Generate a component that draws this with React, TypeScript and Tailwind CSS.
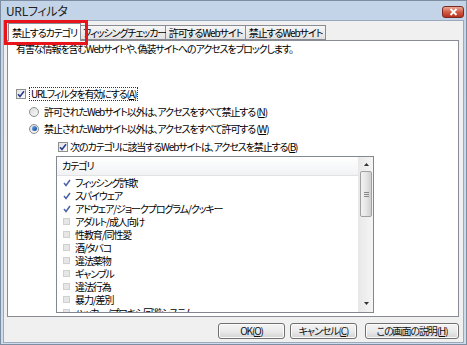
import type { ReactNode } from 'react';

const categories: { name: string; checked: boolean }[] = [
  { name: 'フィッシング詐欺', checked: true },
  { name: 'スパイウェア', checked: true },
  { name: 'アドウェア/ジョークプログラム/クッキー', checked: true },
  { name: 'アダルト/成人向け', checked: false },
  { name: '性教育/同性愛', checked: false },
  { name: '酒/タバコ', checked: false },
  { name: '違法薬物', checked: false },
  { name: 'ギャンブル', checked: false },
  { name: '違法行為', checked: false },
  { name: '暴力/差別', checked: false },
  { name: 'ハッカー/プロキシ回避システム', checked: false },
];

function Check({ checked = false }: { checked?: boolean }) {
  return (
    <span className="flex h-[10px] w-[10px] shrink-0 items-center justify-center border border-[#8e8f8f] bg-gradient-to-br from-[#e3e3e3] to-[#fbfbfb]">
      {checked && (
        <svg width="8" height="8" viewBox="0 0 8 8">
          <path d="M1 4.2 L3 6.4 L7 1.2" fill="none" stroke="#2a3f8f" strokeWidth="1.6" />
        </svg>
      )}
    </span>
  );
}

function Radio({ on = false }: { on?: boolean }) {
  return (
    <span className="flex h-[10px] w-[10px] shrink-0 items-center justify-center rounded-full border border-[#8e8f8f] bg-gradient-to-br from-[#dcdcdc] to-[#f8f8f8]">
      {on && <span className="h-[5px] w-[5px] rounded-full bg-gradient-to-br from-[#6fb0f0] to-[#0d3f92]" />}
    </span>
  );
}

function ListCheck({ checked }: { checked: boolean }) {
  return checked ? (
    <span className="flex h-[8px] w-[8px] shrink-0 items-center justify-center">
      <svg width="8" height="8" viewBox="0 0 8 8">
        <path d="M1 4 L3 6.5 L7 1" fill="none" stroke="#4a62a8" strokeWidth="1.5" />
      </svg>
    </span>
  ) : (
    <span className="h-[7px] w-[7px] shrink-0 border border-[#d0d0d0] bg-[#e6e6e6]" />
  );
}

function Btn({ children, w }: { children: ReactNode; w: string }) {
  return (
    <div
      className={`flex h-[16px] ${w} items-center justify-center whitespace-nowrap rounded-[3px] border border-[#707070] bg-gradient-to-b from-[#f4f4f4] via-[#ebebeb] to-[#d4d4d4] text-[10px] text-[#111] shadow-[inset_0_0_0_1px_#fcfcfc]`}
    >
      {children}
    </div>
  );
}

const U = ({ c }: { c: string }) => <span className="underline">{c}</span>;

const tabCls =
  'flex h-[15px] items-center justify-center whitespace-nowrap border border-l-0 border-[#898c95] bg-gradient-to-b from-[#f6f6f6] to-[#e2e2e2]';

export default function App() {
  return (
    <div className="relative flex h-[345px] w-[467px] flex-col overflow-hidden border border-[#7d8ea3] bg-gradient-to-b from-[#c3d4e8] to-[#cfdceb] font-['Noto_Sans_CJK_JP',sans-serif] leading-[12px] tracking-[-1.1px] text-black [font-feature-settings:'palt']">
      {/* title bar */}
      <div className="flex h-[19px] shrink-0 items-center justify-between pl-[5px] pr-[2px]">
        <span className="text-[12px] tracking-[-0.3px] text-[#222]">URLフィルタ</span>
        <div className="mt-[2px] flex h-[12px] w-[22px] items-center justify-center rounded-[3px] border border-[#7a2a20] bg-gradient-to-b from-[#e8a898] via-[#d25a44] to-[#b8311c]">
          <svg width="9" height="8" viewBox="0 0 9 8">
            <path d="M1.5 1 L7.5 7 M7.5 1 L1.5 7" stroke="white" strokeWidth="1.8" />
          </svg>
        </div>
      </div>

      {/* body */}
      <div className="mx-[2px] mb-[1px] flex flex-1 flex-col border border-[#9aa9bb] bg-[#f0f0f0] pl-[3px] pr-[4px]">
        {/* tabs */}
        <div className="flex h-[19px] shrink-0 items-end text-[10px]">
          <div className="relative z-10 mb-[-1px] ml-[1px] flex h-[18px] w-[73px] items-center justify-center whitespace-nowrap border border-b-0 border-[#898c95] bg-white">
            禁止するカテゴリ
          </div>
          <div className={`${tabCls} w-[85px] pl-[3px]`}>フィッシングチェッカー</div>
          <div className={`${tabCls} w-[80px]`}>許可するWebサイト</div>
          <div className={`${tabCls} w-[80px]`}>禁止するWebサイト</div>
        </div>

        {/* panel */}
        <div className="flex h-[277px] shrink-0 flex-col border border-[#898c95] bg-white pl-[8px] text-[10px]">
          <p className="mt-[1px] h-[13px] whitespace-nowrap pt-[1px]">有害な情報を含むWebサイトや、偽装サイトへのアクセスをブロックします。</p>

          <div className="mt-[32px] flex h-[13px] items-center whitespace-nowrap">
            <Check checked />
            <span className="ml-[3px] border border-dotted border-[#333] px-[1px]">
              URLフィルタを有効にする(<U c="A" />)
            </span>
          </div>
          <div className="mt-[5px] flex h-[13px] items-center whitespace-nowrap pl-[13px]">
            <Radio />
            <span className="ml-[5px]">
              許可されたWebサイト以外は、アクセスをすべて禁止する (<U c="N" />)
            </span>
          </div>
          <div className="mt-[4px] flex h-[13px] items-center whitespace-nowrap pl-[13px]">
            <Radio on />
            <span className="ml-[5px]">
              禁止されたWebサイト以外は、アクセスをすべて許可する (<U c="W" />)
            </span>
          </div>
          <div className="mt-[5px] flex h-[13px] items-center whitespace-nowrap pl-[42px]">
            <Check checked />
            <span className="ml-[2px]">
              次のカテゴリに該当するWebサイトは、アクセスを禁止する(<U c="B" />)
            </span>
          </div>

          {/* category list */}
          <div className="ml-[40px] mt-[3px] flex h-[157px] w-[318px] overflow-hidden border border-[#828790] bg-white">
            <div className="flex flex-1 flex-col overflow-hidden">
              <div className="flex h-[19px] shrink-0 items-center border-b border-[#e2e2e2] bg-gradient-to-b from-white to-[#f1f2f4] pl-[5px]">
                カテゴリ
              </div>
              {categories.map((c) => (
                <div key={c.name} className="flex h-[13px] shrink-0 items-center whitespace-nowrap pl-[6px]">
                  <span className="flex w-[11px] justify-start">
                    <ListCheck checked={c.checked} />
                  </span>
                  <span className="ml-[1px]">{c.name}</span>
                </div>
              ))}
            </div>
            {/* scrollbar */}
            <div className="flex w-[15px] shrink-0 flex-col items-center border-l border-[#e8e8e8] bg-gradient-to-r from-[#e9e9e9] to-[#f5f5f5]">
              <div className="flex h-[14px] items-center">
                <svg width="5" height="3" viewBox="0 0 5 3">
                  <path d="M0 3 L2.5 0 L5 3 Z" fill="#333" />
                </svg>
              </div>
              <div className="flex h-[46px] w-[12px] flex-col items-center justify-center gap-[1px] rounded-[2px] border border-[#a0a0a0] bg-gradient-to-r from-[#f2f2f2] via-[#e6e6e6] to-[#cfcfcf]">
                <span className="h-px w-[5px] bg-[#888]" />
                <span className="h-px w-[5px] bg-[#888]" />
                <span className="h-px w-[5px] bg-[#888]" />
              </div>
              <div className="flex-1" />
              <div className="mb-[4px] flex h-[10px] items-center">
                <svg width="5" height="3" viewBox="0 0 5 3">
                  <path d="M0 0 L2.5 3 L5 0 Z" fill="#333" />
                </svg>
              </div>
            </div>
          </div>
        </div>

        {/* buttons */}
        <div className="mt-[6px] flex justify-end">
          <Btn w="w-[67px]">
            OK(<U c="O" />)
          </Btn>
          <div className="w-[5px]" />
          <Btn w="w-[67px]">
            キャンセル(<U c="C" />)
          </Btn>
          <div className="w-[8px]" />
          <Btn w="w-[94px]">
            この画面の説明(<U c="H" />)
          </Btn>
        </div>
      </div>

      {/* highlight box */}
      <div className="absolute left-[3px] top-[19px] h-[25px] w-[84px] border-[3px] border-[#e8141c]" />
    </div>
  );
}
